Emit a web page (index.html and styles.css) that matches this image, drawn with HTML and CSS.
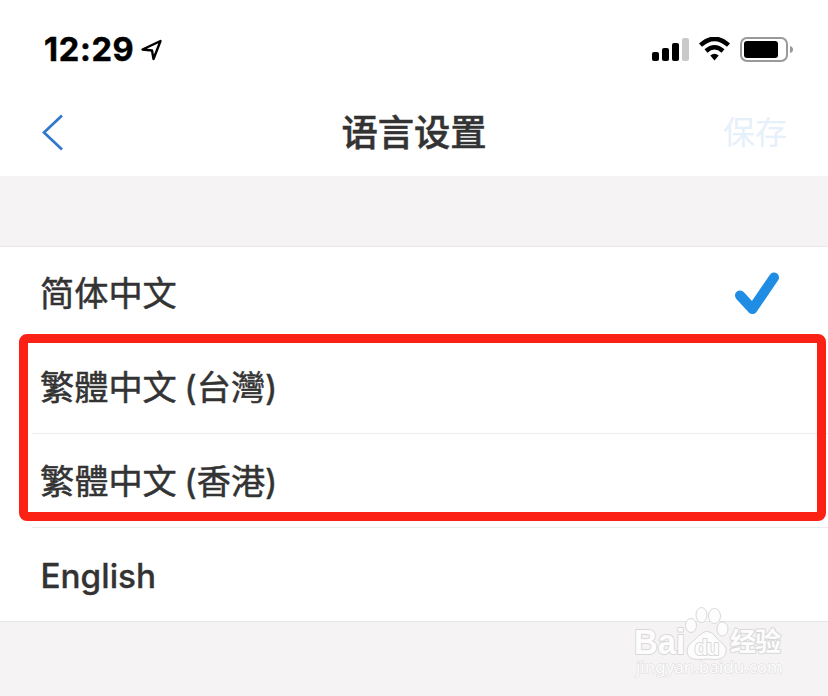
FILE: index.html
```html
<!DOCTYPE html>
<html lang="zh-CN">
<head>
<meta charset="utf-8">
<meta name="viewport" content="width=device-width, initial-scale=1">
<title>语言设置</title>
<link rel="stylesheet" href="styles.css">
</head>
<body>
<div class="screen">
  <header class="status">
    <span class="time">12:29</span>
    <svg class="location" width="24" height="24" viewBox="0 0 24 24"><path d="M2.500 11.500 20.500 3 13.500 21 12 12.500Z"/></svg>
    <div class="indicators">
      <svg width="38" height="26" viewBox="0 0 38 26">
        <rect x="0" y="15" width="7" height="9" rx="2"/><rect x="10" y="11" width="7" height="13" rx="2"/><rect x="20" y="6" width="7" height="18" rx="2"/><rect class="weak" x="30" y="1" width="7" height="23" rx="2"/>
      </svg>
      <svg class="wifi" width="32" height="26" viewBox="0 0 32 26">
        <path class="wave" d="M1.500 8.200Q15.500-4.500 29.500 8.200M7 14Q15.500 6.500 24 14"/>
        <path d="M11.300 18.500Q15.500 15 19.700 18.500L15.500 23.500Z"/>
      </svg>
      <svg class="battery" width="54" height="26" viewBox="0 0 54 26">
        <rect class="shell" x="1" y="1" width="46" height="23" rx="6"/><rect x="4" y="4" width="34" height="17" rx="3"/><path class="tip" d="M50 9Q53 10 53 12.500T50 16Z"/>
      </svg>
    </div>
  </header>
  <nav class="navbar">
    <svg class="back" width="24" height="38" viewBox="0 0 24 38"><path d="M22 2.500 4 19.500 22 36.500"/></svg>
    <h1 class="title">语言设置</h1>
    <span class="save">保存</span>
  </nav>
  <main class="options">
    <div class="option"><span>简体中文</span>
      <svg class="check" width="46" height="44" viewBox="0 0 46 44"><path d="M6 23.500 18.500 37 40 5.500"/></svg>
    </div>
    <div class="option" lang="zh-TW"><span>繁體中文</span><span class="region">(台灣)</span></div>
    <div class="option" lang="zh-HK"><span>繁體中文</span><span class="region">(香港)</span></div>
    <div class="option"><span class="latin">English</span></div>
    <div class="highlight"></div>
  </main>
  <svg class="watermark" width="160" height="80" viewBox="0 0 160 80">
    <g class="mark">
      <text class="brand" x="2" y="54" textLength="51" lengthAdjust="spacingAndGlyphs">Bai</text>
      <path d="M69 34Q75 29 81 34C85 38 87 41 91 44C97 49 94 58 87 59C82 60 79 59 75 59C70 59 66 60 61 59C54 57 53 48 59 43C63 40 65 37 69 34Z"/>
      <ellipse cx="59" cy="25.500" rx="5.500" ry="7"/><ellipse cx="69.500" cy="15" rx="5.500" ry="7.500"/><ellipse cx="82.500" cy="16" rx="6" ry="7.500"/><ellipse cx="90.500" cy="29" rx="5.500" ry="7"/>
      <text class="du" x="62.500" y="55" textLength="25">du</text>
      <text class="experience" x="98" y="51" textLength="51">经验</text>
      <text class="domain" x="4" y="73" textLength="147">jingyan.baidu.com</text>
    </g>
  </svg>
</div>
</body>
</html>
```
FILE: styles.css
```css
* { box-sizing: border-box; }
body { margin: 0; background: #f5f3f4; color: #333; font-family: Inter, "Noto Sans CJK SC", sans-serif; }
.screen { position: relative; height: 696px; overflow: hidden; }
.status { display: flex; align-items: center; height: 88px; padding: 11px 34px 0 44px; background: #fff; }
.time { padding-top: 1px; color: #000; font-size: 32.500px; font-weight: 700; line-height: 40px; letter-spacing: .7px; -webkit-text-stroke: .5px #000; }
.location { margin-left: 6px; fill: none; stroke: #000; stroke-width: 2.400; stroke-linejoin: round; }
.indicators { display: flex; margin-left: auto; }
.weak { fill: #c9c9c9; }
.wifi { margin-left: 9px; }
.wave { fill: none; stroke: #000; stroke-width: 4.500; }
.battery { margin-left: 9px; }
.indicators svg { flex: none; }
.shell { fill: none; stroke: #999; stroke-width: 2; }
.tip { fill: #999; }
.navbar { display: grid; grid-template-columns: 150px 1fr 150px; align-items: center; height: 88px; padding: 0 41px 0 40px; background: #fff; }
.back { fill: none; stroke: #3077cd; stroke-width: 2.700; }
.title { margin: 0; padding: 1px 0 0 1px; text-align: center; font-size: 36.300px; font-weight: 500; line-height: 48px; -webkit-text-stroke: .5px #333; }
.save { justify-self: end; padding-top: 1px; color: #e6f0fa; font-size: 32px; line-height: 48px; }
.options { position: relative; height: 376px; margin-top: 70px; border-top: 1px solid #e8e8e8; border-bottom: 1px solid #e5e5e5; background: #fff; }
.option { display: flex; align-items: center; height: 94px; margin-left: 32px; padding: 2px 0 0 8px; border-bottom: 1px solid #ececec; font-size: 34.200px; line-height: 48px; -webkit-text-stroke: .5px #333; }
.option:first-child { height: 93px; }
.option:nth-child(4) { border: 0; }
.region { margin-left: 7.500px; }
.latin { padding-left: .5px; font-weight: 500; font-size: 33.300px; -webkit-text-stroke: .3px #333; }
.check { margin-left: auto; margin-right: 48px; fill: none; stroke: #208de4; stroke-width: 10; stroke-linecap: round; stroke-linejoin: round; }
.highlight { position: absolute; left: 19px; top: 87px; width: 807px; height: 187px; border: 9px solid #fb2115; border-radius: 8px; }
.watermark { position: absolute; left: 632px; top: 600px; }
.mark { fill: #fdfdfd; stroke: #d9d8d9; stroke-width: 1; }
.mark text { paint-order: stroke; stroke-width: 2; stroke-linejoin: round; }
.brand { font: 700 35px "Liberation Sans", sans-serif; }
.du { font: 700 22px "Liberation Sans", sans-serif; }
.experience { font: 700 26px "Noto Sans CJK SC", sans-serif; }
.mark .domain { font: 400 17px "Noto Sans", sans-serif; stroke-width: 1; }
```
